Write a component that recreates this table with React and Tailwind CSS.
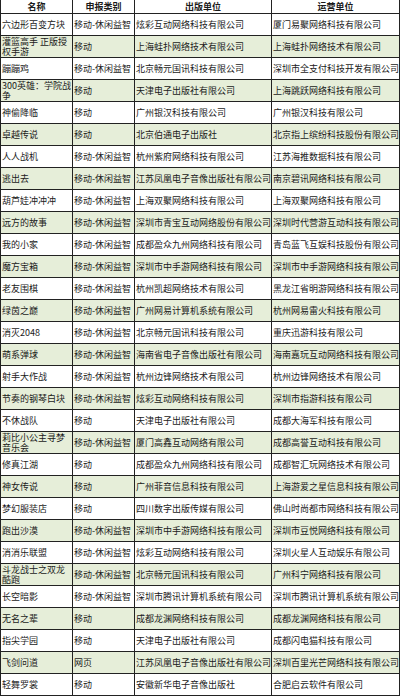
import React from "react";

const rows = [
  ["六边形百变方块", "移动-休闲益智", "炫彩互动网络科技有限公司", "厦门易聚网络科技有限公司"],
  ["灌篮高手 正版授权手游", "移动", "上海蛙扑网络技术有限公司", "上海蛙扑网络技术有限公司"],
  ["蹦蹦鸡", "移动-休闲益智", "北京畅元国讯科技有限公司", "深圳市全支付科技开发有限公司"],
  ["300英雄：学院战争", "移动", "天津电子出版社有限公司", "上海跳跃网络科技有限公司"],
  ["神偷降临", "移动", "广州银汉科技有限公司", "广州银汉科技有限公司"],
  ["卓越传说", "移动", "北京伯通电子出版社", "北京指上缤纷科技股份有限公司"],
  ["人人战机", "移动-休闲益智", "杭州紫府网络科技有限公司", "江苏海推数据科技有限公司"],
  ["逃出去", "移动-休闲益智", "江苏凤凰电子音像出版社有限公司", "南京碧讯网络科技有限公司"],
  ["葫芦娃冲冲冲", "移动-休闲益智", "上海双聚网络科技有限公司", "上海双聚网络科技有限公司"],
  ["远方的故事", "移动-休闲益智", "深圳市青宝互动网络股份有限公司", "深圳时代营游互动科技有限公司"],
  ["我的小家", "移动-休闲益智", "成都盈众九州网络科技有限公司", "青岛蓝飞互娱科技股份有限公司"],
  ["魔方宝箱", "移动-休闲益智", "深圳市中手游网络科技有限公司", "深圳市中手游网络科技有限公司"],
  ["老友围棋", "移动-休闲益智", "杭州凯超网络技术有限公司", "黑龙江省明游网络科技有限公司"],
  ["绿茵之巅", "移动-休闲益智", "广州网易计算机系统有限公司", "杭州网易雷火科技有限公司"],
  ["消灭2048", "移动-休闲益智", "北京畅元国讯科技有限公司", "重庆迅游科技有限公司"],
  ["萌系弹球", "移动-休闲益智", "海南省电子音像出版社有限公司", "海南嘉玩互动网络科技有限公司"],
  ["射手大作战", "移动-休闲益智", "杭州边锋网络技术有限公司", "杭州边锋网络技术有限公司"],
  ["节奏的钢琴白块", "移动-休闲益智", "炫彩互动网络科技有限公司", "深圳市指游科技有限公司"],
  ["不休战队", "移动", "天津电子出版社有限公司", "成都大海军科技有限公司"],
  ["莉比小公主寻梦音乐会", "移动-休闲益智", "厦门高鑫互动网络有限公司", "成都高誉互动科技有限公司"],
  ["修真江湖", "移动", "成都盈众九州网络科技有限公司", "成都智汇玩网络技术有限公司"],
  ["神女传说", "移动", "广州菲音信息科技有限公司", "上海游爱之星信息科技有限公司"],
  ["梦幻服装店", "移动", "四川数字出版传媒有限公司", "佛山时尚都市网络科技有限公司"],
  ["跑出沙漠", "移动-休闲益智", "深圳市中手游网络科技有限公司", "深圳市豆悦网络科技有限公司"],
  ["消消乐联盟", "移动-休闲益智", "炫彩互动网络科技有限公司", "深圳火星人互动娱乐有限公司"],
  ["斗龙战士之双龙酷跑", "移动-休闲益智", "北京畅元国讯科技有限公司", "广州科宁网络科技有限公司"],
  ["长空暗影", "移动-休闲益智", "深圳市腾讯计算机系统有限公司", "深圳市腾讯计算机系统有限公司"],
  ["无名之辈", "移动", "成都龙渊网络科技有限公司", "成都龙渊网络科技有限公司"],
  ["指尖学园", "移动", "天津电子出版社有限公司", "成都闪电猫科技有限公司"],
  ["飞剑问道", "网页", "江苏凤凰电子音像出版社有限公司", "深圳百里光芒网络科技有限公司"],
  ["轻舞罗裳", "移动", "安徽新华电子音像出版社", "合肥启云软件有限公司"],
];

const font = { fontFamily: '"Noto Sans CJK SC", "Liberation Sans", sans-serif' };

export default function App() {
  return (
    <div className="w-[400px] h-[696px] bg-white text-[#1a1a1a] overflow-hidden" style={font}>
      {/* header */}
      <div className="grid grid-cols-[72px_62px_137px_1fr] h-[14px] border-b border-[#222] text-[9px] font-bold leading-[13px]">
        <div className="border-l border-[#222] text-center">名称</div>
        <div className="border-l border-[#222] text-center">申报类别</div>
        <div className="border-l border-[#222] text-center">出版单位</div>
        <div className="border-l border-r border-[#222] text-center">运营单位</div>
      </div>

      {rows.map((r, i) => (
        <div
          key={i}
          className={
            "grid grid-cols-[72px_62px_137px_1fr] h-[22px] border-b border-[#222] text-[9px] " +
            (i % 2 === 1 ? "bg-[#e6eed9]" : "bg-white")
          }
        >
          <div className="border-l border-[#222] pl-[1px] flex items-center leading-[10px] overflow-hidden">
            {r[0]}
          </div>
          <div className="border-l border-[#222] pl-[1px] flex items-center whitespace-nowrap overflow-hidden">
            {r[1]}
          </div>
          <div className="border-l border-[#222] pl-[1px] flex items-center whitespace-nowrap overflow-hidden">
            {r[2]}
          </div>
          <div className="border-l border-r border-[#222] pl-[1px] flex items-center whitespace-nowrap overflow-hidden">
            {r[3]}
          </div>
        </div>
      ))}
    </div>
  );
}
